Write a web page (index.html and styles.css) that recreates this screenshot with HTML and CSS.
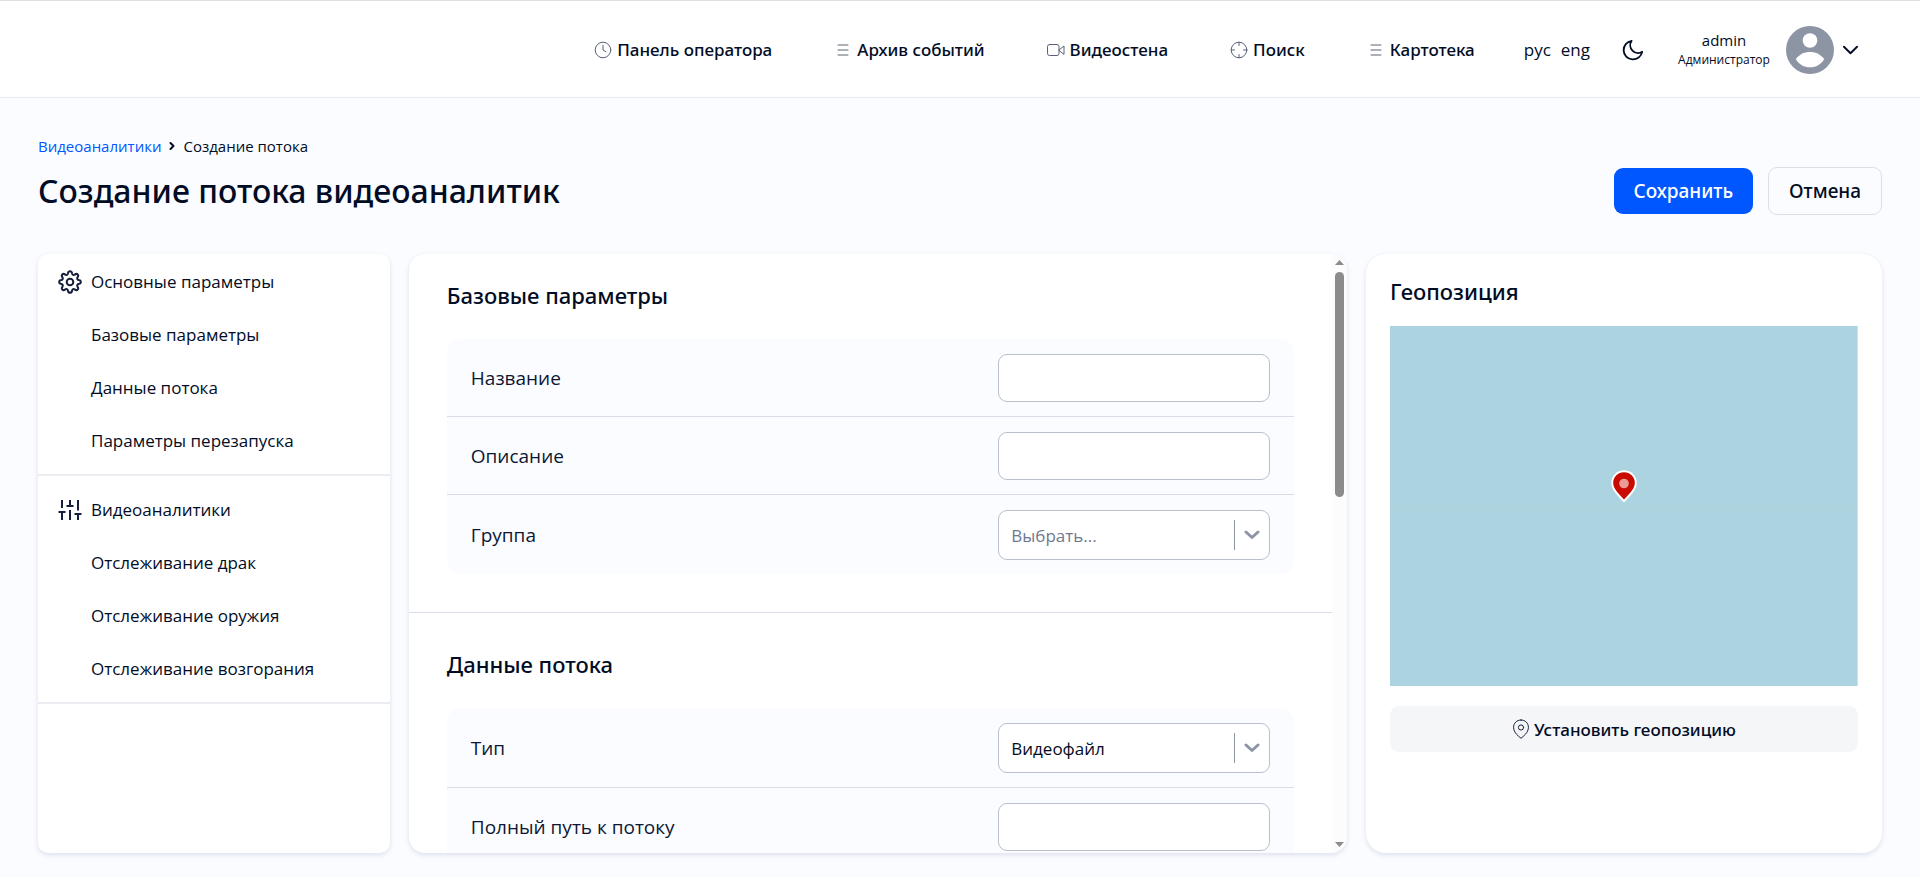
FILE: index.html
```html
<!DOCTYPE html>
<html lang="ru">
<head>
    <meta charset="UTF-8">
    <meta name="viewport" content="width=device-width, initial-scale=1">
    <title>Создание потока видеоаналитик</title>
    <link rel="stylesheet" href="styles.css">
</head>
<body>
<header class="header">
    <nav class="nav">
        <a class="nav-link" href="#operator">
            <svg class="icon" viewBox="0 0 20 20"><circle cx="10" cy="10" r="7.8"/><path d="M10 5.2V10l3 1.8"/></svg>
            Панель оператора
        </a>
        <a class="nav-link" href="#archive">
            <svg class="icon" viewBox="0 0 20 20"><path d="M5 5h10M5 10h10M5 15h10"/></svg>
            Архив событий
        </a>
        <a class="nav-link" href="#wall">
            <svg class="icon" viewBox="0 0 20 20"><rect x="1.5" y="4.5" width="11.5" height="11" rx="2"/><path d="M13 10l5-4v8z"/></svg>
            Видеостена
        </a>
        <a class="nav-link" href="#search">
            <svg class="icon" viewBox="0 0 20 20"><circle cx="10" cy="10" r="7.8"/><path d="M10 2.2v3.3M10 14.5v3.3M2.2 10h3.3M14.5 10h3.3"/></svg>
            Поиск
        </a>
        <a class="nav-link" href="#cards">
            <svg class="icon" viewBox="0 0 20 20"><path d="M5 5h10M5 10h10M5 15h10"/></svg>
            Картотека
        </a>
    </nav>
    <div class="langs">
        <button class="lang" type="button">рус</button>
        <button class="lang" type="button">eng</button>
    </div>
    <button class="theme" type="button" aria-label="Тёмная тема">
        <svg viewBox="0 0 24 24"><path d="M22 14A10.2 10.2 0 1 1 10.5 2 8.5 8.5 0 0 0 22 14z"/></svg>
    </button>
    <button class="user" type="button">
        <span class="user-info">
            <span class="user-name">admin</span>
            <span class="user-role">Администратор</span>
        </span>
        <svg class="avatar" viewBox="0 0 48 48">
            <circle cx="24" cy="24" r="24" fill="#8d95a5"/>
            <circle cx="24" cy="14.5" r="7.3" fill="#fff"/>
            <path d="M9.8 33.2C13 28.6 18 26 24 26s11 2.6 14.2 7.2C35 38.4 30 41.3 24 41.3S13 38.4 9.8 33.2z" fill="#fff"/>
        </svg>
        <svg class="arrow" viewBox="0 0 16 10"><path d="M1 1.5L8 8.5l7-7"/></svg>
    </button>
</header>

<main class="page">
    <div class="breadcrumbs">
        <a href="#analytics">Видеоаналитики</a>
        <svg class="crumb-arrow" viewBox="0 0 6 10"><path d="M1.5 2L4.5 5l-3 3"/></svg>
        <span>Создание потока</span>
    </div>
    <div class="title-row">
        <h1>Создание потока видеоаналитик</h1>
        <div class="actions">
            <button class="btn btn-primary" type="submit" form="stream">Сохранить</button>
            <button class="btn btn-outline" type="button">Отмена</button>
        </div>
    </div>

    <div class="columns">
        <aside class="card sidebar">
            <div class="menu-group">
                <a class="menu-title" href="#main">
                    <svg class="menu-icon" viewBox="0 0 24 24"><circle cx="12" cy="12" r="3.3"/><path d="M12 1.2c1.4 0 1.9 1 2.1 2.3.3 1.3 1.5 1.8 2.6 1.1 1.1-.8 2.1-1.1 3-.2s.6 1.9-.2 3c-.7 1.1-.2 2.3 1.1 2.6 1.3.2 2.2.7 2.2 2s-.9 1.8-2.2 2c-1.3.3-1.8 1.5-1.1 2.6.8 1.1 1.1 2.1.2 3s-1.9.6-3-.2c-1.1-.7-2.3-.2-2.6 1.1-.2 1.3-.7 2.3-2.1 2.3s-1.9-1-2.1-2.3c-.3-1.3-1.5-1.8-2.6-1.1-1.1.8-2.1 1.1-3 .2s-.6-1.9.2-3c.7-1.1.2-2.3-1.1-2.6-1.3-.2-2.2-.7-2.2-2s.9-1.8 2.2-2c1.3-.3 1.8-1.5 1.1-2.6-.8-1.1-1.1-2.1-.2-3s1.9-.6 3 .2c1.1.7 2.3.2 2.6-1.1.2-1.3.7-2.3 2.1-2.3z"/></svg>
                    Основные параметры
                </a>
                <a class="menu-item" href="#base">Базовые параметры</a>
                <a class="menu-item" href="#data">Данные потока</a>
                <a class="menu-item" href="#restart">Параметры перезапуска</a>
            </div>
            <div class="menu-group">
                <a class="menu-title" href="#analytics">
                    <svg class="menu-icon" viewBox="0 0 24 24"><path d="M4 2v8M4 14v8M.5 14h7M12 2v6M12 12v10M8.5 8h7M20 2v10.5M20 16v6M16.5 16h7"/></svg>
                    Видеоаналитики
                </a>
                <a class="menu-item" href="#fights">Отслеживание драк</a>
                <a class="menu-item" href="#weapons">Отслеживание оружия</a>
                <a class="menu-item" href="#fire">Отслеживание возгорания</a>
            </div>
        </aside>

        <form class="card form" id="stream">
            <div class="form-body">
                <section class="section" id="base">
                    <h2>Базовые параметры</h2>
                    <div class="fields">
                        <div class="field">
                            <label for="name">Название</label>
                            <input class="control" id="name" type="text">
                        </div>
                        <div class="field">
                            <label for="description">Описание</label>
                            <input class="control" id="description" type="text">
                        </div>
                        <div class="field">
                            <label for="group">Группа</label>
                            <div class="select">
                                <select class="control empty" id="group"><option>Выбрать...</option></select>
                                <svg class="select-arrow" viewBox="0 0 16 10"><path d="M2 2l6 5.5L14 2"/></svg>
                            </div>
                        </div>
                    </div>
                </section>
                <section class="section" id="data">
                    <h2>Данные потока</h2>
                    <div class="fields">
                        <div class="field">
                            <label for="type">Тип</label>
                            <div class="select">
                                <select class="control" id="type"><option>Видеофайл</option></select>
                                <svg class="select-arrow" viewBox="0 0 16 10"><path d="M2 2l6 5.5L14 2"/></svg>
                            </div>
                        </div>
                        <div class="field">
                            <label for="path">Полный путь к потоку</label>
                            <input class="control" id="path" type="text">
                        </div>
                    </div>
                </section>
            </div>
            <div class="scrollbar" aria-hidden="true">
                <svg class="scroll-arrow" viewBox="0 0 9 5"><path d="M0 5l4.5-5L9 5z"/></svg>
                <div class="scroll-track"><div class="scroll-thumb"></div></div>
                <svg class="scroll-arrow" viewBox="0 0 9 5"><path d="M0 0l4.5 5L9 0z"/></svg>
            </div>
        </form>

        <section class="card geo">
            <h2>Геопозиция</h2>
            <div class="map">
                <svg class="marker" viewBox="0 0 26 33">
                    <path d="M13 1.2C6.3 1.2 1.2 6.3 1.2 13c0 3.5 1.5 6.2 3.8 9.2 2.5 3.2 5.5 6.1 8 9 2.5-2.9 5.5-5.8 8-9 2.3-3 3.8-5.7 3.8-9.2C24.8 6.3 19.7 1.2 13 1.2z" fill="#c80a00" stroke="#fff" stroke-width="2"/>
                    <circle cx="13" cy="13.5" r="4.8" fill="#ec9a96"/>
                </svg>
            </div>
            <button class="btn-geo" type="button">
                <svg class="pin" viewBox="0 0 18 20"><path d="M9 1C4.6 1 1.6 4.2 1.6 8.3c0 2.8 1.3 5 3 7 1.3 1.5 2.9 2.7 4.4 4 1.5-1.3 3.1-2.5 4.4-4 1.7-2 3-4.2 3-7C16.4 4.2 13.4 1 9 1z"/><circle cx="9" cy="8.5" r="2.6"/></svg>
                Установить геопозицию
            </button>
        </section>
    </div>
</main>
</body>
</html>
```
FILE: styles.css
```css
*, *:before, *:after {
    box-sizing: border-box;
}

body {
    margin: 0;
    height: 100vh;
    display: flex;
    flex-direction: column;
    font-family: 'Open Sans', 'Noto Sans', sans-serif;
    font-size: 17px;
    color: #020c25;
    background: #fbfcff;
}

a {
    color: inherit;
    text-decoration: none;
}

button, input, select {
    font: inherit;
    color: inherit;
}

button {
    padding: 0;
    border: none;
    background: none;
    cursor: pointer;
}

h1, h2, .nav, .btn, .btn-geo {
    margin: 0;
    font-family: 'Noto Sans', 'Open Sans', sans-serif;
    font-weight: 500;
}

h2 {
    font-size: 22px;
    line-height: 30px;
}

svg {
    flex: none;
    fill: none;
    stroke-linecap: round;
    stroke-linejoin: round;
}

/* header */
.header {
    flex: none;
    display: flex;
    align-items: center;
    justify-content: flex-end;
    height: 98px;
    padding: 1px 62px 0;
    background: #fff;
    border-top: 1px solid #dfdfe1;
    border-bottom: 1px solid #e9ebf0;
}

.nav {
    display: flex;
    gap: 61px;
    margin-right: 49px;
}

.nav-link {
    display: flex;
    align-items: center;
    gap: 4px;
}

.icon {
    width: 20px;
    height: 20px;
    stroke: #596275;
}

.langs {
    display: flex;
    gap: 10px;
    margin-right: 32px;
}

.theme {
    display: flex;
    margin-right: 32px;
}

.theme svg {
    width: 22px;
    height: 22px;
    stroke: #020c25;
    stroke-width: 2;
}

.user {
    display: flex;
    align-items: center;
}

.user-info {
    display: flex;
    flex-direction: column;
    align-items: center;
    min-width: 96px;
    margin-right: 14px;
}

.user-name {
    font-size: 15px;
    line-height: 20px;
}

.user-role {
    font-size: 12px;
    line-height: 20px;
}

.avatar {
    width: 48px;
    height: 48px;
    margin-right: 9px;
}

.arrow {
    width: 15px;
    height: 10px;
    stroke: #020c25;
    stroke-width: 2;
}

/* page */
.page {
    flex: 1;
    min-height: 0;
    display: flex;
    flex-direction: column;
    padding: 38px 38px 24px;
}

.breadcrumbs {
    display: flex;
    align-items: center;
    gap: 8px;
    font-size: 15px;
    line-height: 20px;
}

.breadcrumbs a {
    color: #0057ff;
}

.crumb-arrow {
    width: 6px;
    height: 10px;
    stroke: #020c25;
    stroke-width: 2;
}

.title-row {
    display: flex;
    align-items: center;
    justify-content: space-between;
    margin: 11px 0 39px;
}

h1 {
    font-size: 32px;
    line-height: 48px;
}

.actions {
    display: flex;
    align-items: center;
    gap: 15px;
}

.btn {
    height: 48px;
    padding: 0 20px;
    border-radius: 9px;
    font-size: 19px;
}

.btn-primary {
    height: 46px;
    color: #fff;
    background: #0057ff;
}

.btn-outline {
    border: 1px solid #dcdfe6;
}

.columns {
    flex: 1;
    min-height: 0;
    display: grid;
    grid-template-columns: 15fr 40fr 22fr;
    grid-template-rows: 100%;
    gap: 19px;
}

.card {
    min-width: 0;
    background: #fff;
    border-radius: 16px;
    box-shadow: 0 2px 5px rgba(40, 60, 130, 0.14);
}

/* sidebar */
.sidebar {
    border-radius: 10px;
}

.menu-group {
    padding: 7px 20px;
    border-bottom: 2px solid #ecedf2;
}

.menu-group:first-child {
    padding-top: 1px;
}

.menu-title, .menu-item {
    display: flex;
    align-items: center;
    height: 53px;
}

.menu-title {
    gap: 9px;
}

.menu-item {
    padding-left: 33px;
}

.menu-icon {
    width: 24px;
    height: 24px;
    stroke: #14203b;
    stroke-width: 2;
    stroke-linecap: butt;
}

/* form */
.form {
    display: flex;
    overflow: hidden;
}

.form-body {
    flex: 1;
    min-width: 0;
    overflow-y: auto;
    scrollbar-width: none;
}

.scrollbar {
    flex: none;
    display: flex;
    flex-direction: column;
    align-items: center;
    gap: 7px;
    width: 15px;
    padding: 6px 0;
    background: #fcfcfc;
}

.scroll-arrow {
    width: 9px;
    height: 5px;
    fill: #8b8b8b;
}

.scroll-track {
    flex: 1;
    width: 9px;
}

.scroll-thumb {
    height: 40%;
    border-radius: 5px;
    background: #8b8b8b;
}

.section {
    padding: 36px 38px 38px;
    border-bottom: 1px solid #d8dde7;
}

.section:first-child {
    padding-top: 26px;
}

.section:last-child {
    border-bottom: none;
}

.fields {
    margin-top: 29px;
    border-radius: 14px;
    background: #fbfcff;
}

.field {
    display: flex;
    align-items: center;
    justify-content: space-between;
    padding: 15px 24px 14px;
    font-size: 19px;
}

.field + .field {
    border-top: 1px solid #d8dde7;
}

.field label {
    color: #0c1833;
}

.control {
    width: 34%;
    height: 48px;
    padding: 0 12px;
    border: 1px solid #b9bfcd;
    border-radius: 9px;
    font-size: 17px;
    background: #fff;
}

.select {
    position: relative;
    width: 34%;
}

.select .control {
    display: block;
    width: 100%;
    height: 50px;
    appearance: none;
}

.select .empty {
    color: #6f7a90;
}

.select:after {
    content: '';
    position: absolute;
    top: 10px;
    right: 35px;
    width: 1px;
    height: 30px;
    background: #8d95a5;
}

.select-arrow {
    position: absolute;
    top: 20px;
    right: 10px;
    width: 16px;
    height: 10px;
    stroke: #8d95a5;
    stroke-width: 3;
    pointer-events: none;
}

/* geoposition */
.geo {
    padding: 22px 24px;
    border-radius: 20px;
}

.map {
    display: flex;
    align-items: center;
    justify-content: center;
    height: 360px;
    margin: 20px 0;
    padding-bottom: 40px;
    border-right: 1px solid #dcdcdc;
    /* tile seams */
    background:
        linear-gradient(#afd5db, #afd5db) 50% 0 / 1px 100% no-repeat,
        linear-gradient(#afd5db, #afd5db) 0 50% / 100% 1px no-repeat,
        #abd3e0;
}

.marker {
    width: 26px;
    height: 33px;
}

.btn-geo {
    display: flex;
    align-items: center;
    justify-content: center;
    gap: 4px;
    width: 100%;
    height: 46px;
    border-radius: 9px;
    background: #f5f6f8;
}

.pin {
    width: 18px;
    height: 20px;
    stroke: #14203b;
}
```
